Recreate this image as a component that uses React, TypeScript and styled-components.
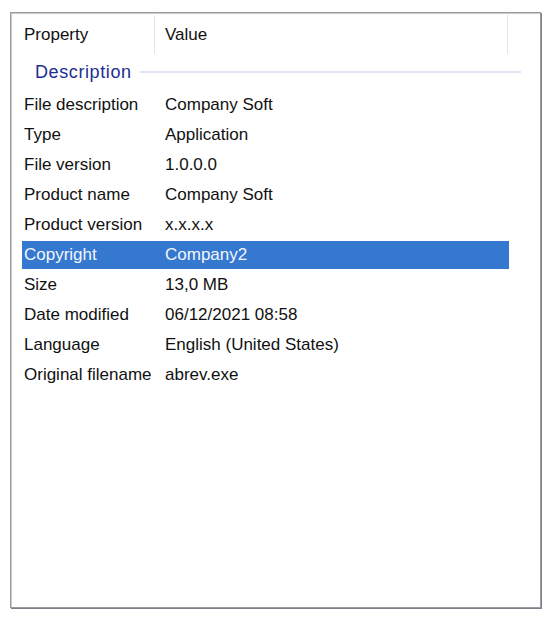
import React from "react";
import styled, { createGlobalStyle } from "styled-components";

const GlobalStyle = createGlobalStyle`
  html, body {
    margin: 0;
    padding: 0;
    background: #ffffff;
  }
  body {
    font-family: "Liberation Sans", Arial, sans-serif;
  }
`;

const Page = styled.div`
  width: 554px;
  height: 620px;
  padding: 12px 0 0 10px;
  box-sizing: border-box;
`;

const ListBox = styled.div`
  width: 531px;
  height: 596px;
  box-sizing: border-box;
  border: 1px solid #9a9ca2;
  box-shadow: inset 1px 1px 0 #c8cace, 1px 1px 0 #7d8088;
  background: #fff;
  padding: 2px 0 0 11px;
`;

const Header = styled.div`
  display: grid;
  grid-template-columns: 133px 353px;
  height: 40px;
`;

const HeaderCell = styled.div<{ $last?: boolean }>`
  display: flex;
  align-items: center;
  padding-left: ${(p) => (p.$last ? "10px" : "2px")};
  border-right: 1px solid #e5e5e5;
  font-size: 17px;
  color: #111;
  height: 39px;
  box-sizing: border-box;
`;

const Group = styled.div`
  display: flex;
  align-items: center;
  height: 34px;
  padding-left: 13px;
  gap: 8px;
  margin-right: 19px;
`;

const GroupTitle = styled.span`
  color: #1c2f91;
  font-size: 18px;
  letter-spacing: 0.6px;
`;

const GroupLine = styled.div`
  flex: 1;
  height: 2px;
  background: #e1e4f2;
`;

const Rows = styled.div`
  display: flex;
  flex-direction: column;
  gap: 2px;
  padding-top: 2px;
`;

const Row = styled.div<{ $selected?: boolean }>`
  display: grid;
  grid-template-columns: 141px 346px;
  width: 487px;
  height: 28px;
  align-items: center;
  font-size: 17px;
  background: ${(p) => (p.$selected ? "#3578d0" : "transparent")};
  color: ${(p) => (p.$selected ? "#f2f6fc" : "#111")};
`;

const Cell = styled.div`
  padding-left: 2px;
  white-space: nowrap;
`;

const rows: [string, string][] = [
  ["File description", "Company Soft"],
  ["Type", "Application"],
  ["File version", "1.0.0.0"],
  ["Product name", "Company Soft"],
  ["Product version", "x.x.x.x"],
  ["Copyright", "Company2"],
  ["Size", "13,0 MB"],
  ["Date modified", "06/12/2021 08:58"],
  ["Language", "English (United States)"],
  ["Original filename", "abrev.exe"],
];

export default function App() {
  return (
    <>
      <GlobalStyle />
      <Page>
        <ListBox>
          <Header>
            <HeaderCell>Property</HeaderCell>
            <HeaderCell $last>Value</HeaderCell>
          </Header>
          <Group>
            <GroupTitle>Description</GroupTitle>
            <GroupLine />
          </Group>
          <Rows>
            {rows.map(([k, v]) => (
              <Row key={k} $selected={k === "Copyright"}>
                <Cell>{k}</Cell>
                <Cell>{v}</Cell>
              </Row>
            ))}
          </Rows>
        </ListBox>
      </Page>
    </>
  );
}
